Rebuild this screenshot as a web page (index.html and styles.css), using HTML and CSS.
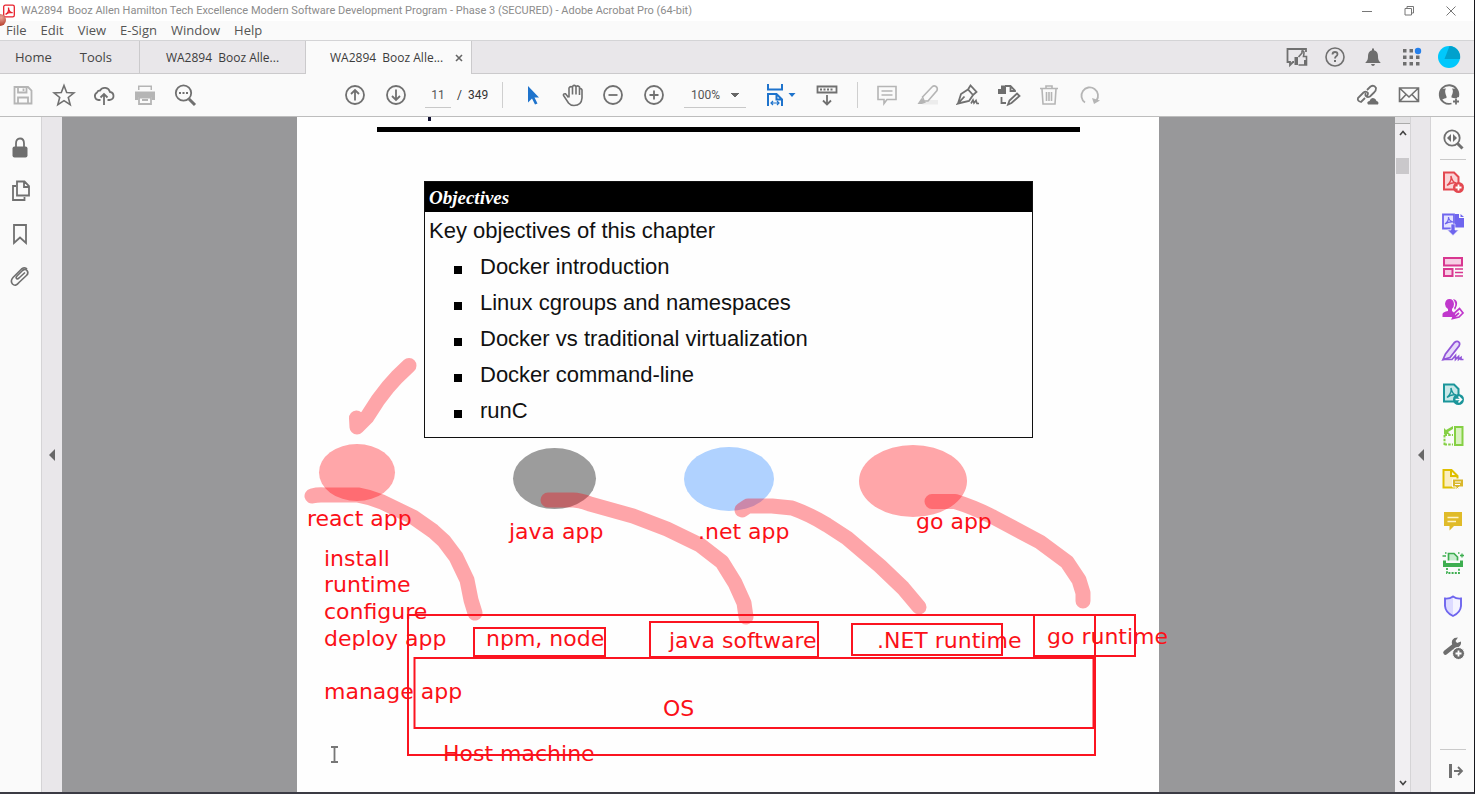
FILE: index.html
```html
<!DOCTYPE html>
<html lang="en">
<head>
<meta charset="utf-8">
<title>WA2894 - Adobe Acrobat Pro (64-bit)</title>
<link rel="stylesheet" href="styles.css">
</head>
<body>
<div class="app">
  <header class="titlebar">
    <svg class="app-logo" viewBox="0 0 14 14" aria-hidden="true"><rect x="1.7" y="1.2" width="10.6" height="11.6" rx="1.6" fill="#fff" stroke="#e8202c" stroke-width="1.3"/><path d="M3.6 10.4C6 9 7 6.500 6.500 3.600C6.500 7 8.500 9 10.600 8.600C8 8.200 5.500 8.800 3.600 10.400Z" fill="none" stroke="#e8202c" stroke-width="1.3"/></svg>
    <span class="title">WA2894&nbsp; Booz Allen Hamilton Tech Excellence Modern Software Development Program - Phase 3 (SECURED) - Adobe Acrobat Pro (64-bit)</span>
    <div class="window-controls">
      <button aria-label="Minimize"><svg viewBox="0 0 12 12"><path d="M1 6.500H11"/></svg></button>
      <button aria-label="Restore"><svg viewBox="0 0 12 12"><path d="M2 3.500h6.500v6.500H2ZM4 3.500V1.500h6.500V8H8.500"/></svg></button>
      <button aria-label="Close"><svg viewBox="0 0 12 12"><path d="M1.500 1.500L10.500 10.500M10.500 1.500L1.500 10.500"/></svg></button>
    </div>
  </header>

  <nav class="menubar" aria-label="Menu">
    <span class="record-dot"></span>
    <button>File</button><button>Edit</button><button>View</button><button>E-Sign</button><button>Window</button><button>Help</button>
  </nav>

  <div class="tabbar">
    <div class="fixed-tabs"><button>Home</button><button>Tools</button></div>
    <button class="tab">WA2894&nbsp; Booz Alle...</button>
    <div class="tab active"><button>WA2894&nbsp; Booz Alle...</button><button class="tab-close" aria-label="Close tab"><svg viewBox="0 0 8 8"><path d="M1 1L7 7M7 1L1 7"/></svg></button></div>
    <div class="icons account">
      <button aria-label="Feedback"><svg viewBox="0 0 24 24"><path d="M9 17H8L5 20V17H2.500V4H21V7" class="s"/><path d="M13.500 12L17 8V6q2-.5 2 2l-.5 3.500H21.500V20H13.500" class="s thin"/><path d="M9.500 12H13V20H9.500ZM19 15h3v5h-3Z" class="f"/></svg></button>
      <button aria-label="Help"><svg viewBox="0 0 24 24"><circle cx="12" cy="12" r="9" class="s thin"/><path d="M9.500 9.500Q9.500 7 12 7T14.500 9.300Q14.500 10.500 13 11.500Q12 12.300 12 13.500" class="s"/><rect x="11" y="15" width="2" height="2" class="f"/></svg></button>
      <button aria-label="Notifications"><svg viewBox="0 0 24 24"><path d="M11 3.500h2v1.700q4 1 4 5.800c0 4 1 5 2.500 6.500V18h-15v-.500C6 16 7 15 7 11q0-4.800 4-5.800ZM10 19h4q-.5 2-2 2t-2-2Z" class="f"/></svg></button>
      <button aria-label="Apps"><svg viewBox="0 0 24 24"><path d="M4 4h3.500v3.500H4ZM10.500 4h3.500v3.500h-3.500ZM4 10.500h3.500v3.500H4ZM10.500 10.500h3.500v3.500h-3.500ZM17 10.500h3.500v3.500H17ZM4 17h3.500v3.500H4ZM10.500 17h3.500v3.500h-3.500ZM17 17h3.500v3.500H17Z" class="f"/><circle cx="19" cy="6" r="3.200" fill="#2680eb"/></svg></button>
      <button aria-label="Account"><svg viewBox="0 0 24 24"><circle cx="12" cy="12" r="11" fill="#00c8fc"/><path d="M12.500 1A11 11 0 0 1 23 14H7.500Z" fill="#00a1cd"/></svg></button>
    </div>
  </div>

  <div class="toolbar">
    <div class="icons file-tools">
      <button aria-label="Save" class="off"><svg viewBox="0 0 24 24"><path d="M3.500 4H17l3.500 3.500V20.500H3.500ZM7 4.500V9.500H15.500V4.500M7 20V14.500H17V20M12.500 5.500V8" class="s"/></svg></button>
      <button aria-label="Star"><svg viewBox="0 0 24 24"><path d="M12 2.500L14.700 9.500L22 9.900L16.300 14.500L18.200 21.600L12 17.600L5.800 21.600L7.700 14.500L2 9.900L9.300 9.500Z" class="s thin"/></svg></button>
      <button aria-label="Upload"><svg viewBox="0 0 24 24"><path d="M8.500 17H6.500A4 4 0 0 1 5 9.500A3 3 0 0 1 8 7.500A5.500 5.500 0 0 1 18 9Q21.500 9.500 21.500 13T17.500 17H15.500" class="s"/><path d="M12 22V11M8.500 14.500L12 11L15.500 14.500" class="s"/></svg></button>
      <button aria-label="Print" class="off"><svg viewBox="0 0 24 24"><path d="M5 2.500H19V7H5ZM2 8.500H22V17H19V14H5V17H2Z" class="f"/><path d="M6.500 4H17.500V7H6.500Z" fill="#fafafa"/><path d="M6 14.500H18V21H6ZM9 17h6" class="s"/></svg></button>
      <button aria-label="Search"><svg viewBox="0 0 24 24"><circle cx="10.500" cy="10" r="7.700" class="s"/><path d="M16 16L22 22" class="s thick"/><path d="M6 9h2v2H6ZM9.500 9h2v2h-2ZM13 9h2v2h-2Z" class="f"/></svg></button>
    </div>
    <div class="icons page-arrows">
      <button aria-label="Previous page"><svg viewBox="0 0 24 24"><circle cx="12" cy="12" r="9" class="s"/><path d="M12 17.500V8M8 11L12 7L16 11" class="s"/></svg></button>
      <button aria-label="Next page"><svg viewBox="0 0 24 24"><circle cx="12" cy="12" r="9" class="s"/><path d="M12 6.500V16M8 13L12 17L16 13" class="s"/></svg></button>
    </div>
    <input class="page-number" aria-label="Page number" value="11">
    <span class="page-count">/&nbsp; 349</span>
    <span class="divider"></span>
    <div class="icons view-tools">
      <button aria-label="Select"><svg viewBox="0 0 24 24"><path d="M8 3L19 14.500H14.500L17.500 20.500L15 21.500L12 15.500L8 19.500Z" fill="#1e73cc"/></svg></button>
      <button aria-label="Hand"><svg viewBox="0 0 24 24"><path d="M7.500 14.500L4.500 10.800Q2 10.500 2.500 12.500L7.500 20Q9.500 22.500 13 22.500Q20.500 22.500 21 15V7Q20.500 5 18.500 6V12M18.500 7V4Q17 2 15 3.500V11.500M15 4Q13.500 1 11.500 3.500V11.500M11.500 4Q9 3 8 5V14.500" class="s thin"/></svg></button>
      <button aria-label="Zoom out"><svg viewBox="0 0 24 24"><circle cx="12" cy="12" r="9" class="s"/><path d="M7.500 12H16.500" class="s"/></svg></button>
      <button aria-label="Zoom in"><svg viewBox="0 0 24 24"><circle cx="12" cy="12" r="9" class="s"/><path d="M7.500 12H16.500M12 7.500V16.500" class="s"/></svg></button>
    </div>
    <select class="zoom-level" aria-label="Zoom level"><option>100%</option></select>
    <div class="icons fit-tools">
      <button aria-label="Fit width" class="wide"><svg viewBox="0 0 34 24"><path d="M5 1V6.500H19V1M5 23V11H13.500L19 16.500V23M13.500 11V16.500H19" fill="none" stroke="#1e73cc" stroke-width="2"/><path d="M8 20H16M10 18L8 20L10 22M14 18L16 20L14 22" fill="none" stroke="#1e73cc" stroke-width="1.200"/><path d="M25.500 10H32.500L29 14Z" fill="#1e73cc"/></svg></button>
      <button aria-label="Toolbar mode"><svg viewBox="0 0 24 24"><path d="M2.500 3.500H21.500V9.500H2.500Z" class="s"/><path d="M5 6.500H19" class="s" stroke-dasharray="2 1.500"/><path d="M12 12V21.500M8 17.500L12 21.500L16 17.500" class="s"/></svg></button>
    </div>
    <span class="divider"></span>
    <div class="icons mark-tools">
      <button aria-label="Comment" class="off"><svg viewBox="0 0 24 24"><path d="M3 3.500H21V16.500H12L9 20.500V16.500H3ZM6.500 8H17.500M6.500 12H17.500" class="s thin"/></svg></button>
      <button aria-label="Highlight" class="off"><svg viewBox="0 0 24 24"><path d="M10 17H22V21.500H6Z" fill="#ececec"/><path d="M6.500 14L16 4Q18 2 20 3.500T21 7.500L12 18H8Z" class="s thin"/><path d="M5.500 15L10 19.500L6 21H1.500Z" class="f"/></svg></button>
      <button aria-label="Sign"><svg viewBox="0 0 24 24"><path d="M2 20.500L5 11L12 6.500L17 12L13 18L2 20.500L8.500 13.500M12 6.500L14.500 2.500L20.500 9L17 12" class="s"/><path d="M15 20.500L17 17L18 20L20 17.500L21 20.500H23" class="s thin"/></svg></button>
      <button aria-label="Edit page"><svg viewBox="0 0 24 24"><path d="M1 6H9V11H1ZM4 2.500H9V6H4Z" class="f"/><path d="M8 3H13.500L18 7.500V9M13.500 3V8H18M4.500 14V20H9" class="s"/><path d="M11 21.500L12.500 17.500L20 10.500L22.500 13L14.500 20Z" class="s"/></svg></button>
      <button aria-label="Delete" class="off"><svg viewBox="0 0 24 24"><path d="M3 5.500H21M9 5V3H15V5M5 6L6 21H18L19 6M9.500 9V18M12 9V18M14.500 9V18" class="s thin"/></svg></button>
      <button aria-label="Redo" class="off"><svg viewBox="0 0 24 24"><path d="M7 19.500A8.300 8.300 0 1 1 18.500 17.500" class="s"/><path d="M14 15L22 17.500L16 21Z" class="f"/></svg></button>
    </div>
    <div class="icons share-tools">
      <button aria-label="Share link"><svg viewBox="0 0 24 24"><path d="M9 15L5 19Q1 18 2 15L7.500 9.500Q10 7.500 12 10Q12 12 11 13M11 7L14.500 3.500Q18 1.500 20 5Q20 8 18.500 9L14 13.500Q11 15 9.500 12.500Q9 11 10 10" class="s"/><path d="M12 21.500Q10 18.500 13.500 18Q15 14 18.500 15.500Q20 16 20.500 18Q23.500 19 22 21.500Z" class="f"/></svg></button>
      <button aria-label="Email"><svg viewBox="0 0 24 24"><path d="M2.500 5H21.500V18.500H2.500ZM3 5.500L12 14L21 5.500M3 18L9 11.500M21 18L15 11.500" class="s thin"/></svg></button>
      <button aria-label="Add person"><svg viewBox="0 0 24 24"><path d="M14.500 20.500A9.300 9.300 0 1 1 21 14" class="s"/><path d="M4 18Q5 16 9.500 15V13.500Q7 8 9 5.500L4 6L2.500 12ZM20 15Q17 15.500 14.500 14.500V13Q17 8 15 5.500L20 6L21.500 13Z" class="f"/><path d="M16 18.500H22M19 15.500V21.500" class="s"/></svg></button>
    </div>
  </div>

  <main class="workspace">
    <aside class="left-rail icons">
      <button aria-label="Security"><svg viewBox="0 0 24 24"><rect x="4.500" y="10.500" width="15" height="11" rx="2" class="f"/><path d="M8 11V7.500Q8 2.500 12 2.500T16 7.500V11" class="s"/></svg></button>
      <button aria-label="Pages"><svg viewBox="0 0 24 24"><path d="M9 2.500H16.500L21 7V16.500H9ZM16 3V8H21M8 7H5V21H16.500V18" class="s"/></svg></button>
      <button aria-label="Bookmarks"><svg viewBox="0 0 24 24"><path d="M6 3H18V21L12 15.500L6 21Z" class="s"/></svg></button>
      <button aria-label="Attachments"><svg viewBox="0 0 24 24"><path d="M17 7.500L11 13Q9 14.500 8.500 13.500Q7.500 12.500 9 11L14 6Q17 3 19 5.500Q21 8 18.500 10.500M20 9L11 17.500Q7.500 22 4.500 19Q2 16 5 12.500L13.500 4Q17 1.500 19 4" class="s thin"/></svg></button>
    </aside>
    <button class="gutter left" aria-label="Toggle navigation pane"><svg viewBox="0 0 6 12"><path d="M6 0V12L0 6Z"/></svg></button>

    <div class="document">
      <article class="page">
        <div class="heading-tail"></div>
        <hr class="rule">
        <section class="objectives">
          <h1>Objectives</h1>
          <p>Key objectives of this chapter</p>
          <ul>
            <li>Docker introduction</li>
            <li>Linux cgroups and namespaces</li>
            <li>Docker vs traditional virtualization</li>
            <li>Docker command-line</li>
            <li>runC</li>
          </ul>
        </section>
        <svg class="annotations" viewBox="297 117 862 675">
          <g>
            <ellipse cx="357" cy="472.500" rx="38" ry="28.500" class="pink"/>
            <ellipse cx="554.500" cy="478.500" rx="41.500" ry="30.500" fill="#9c9c9c"/>
            <ellipse cx="729" cy="479" rx="45" ry="32" fill="#b0d2ff"/>
            <ellipse cx="913" cy="481" rx="54" ry="36" class="pink"/>
          </g>
          <g class="marker">
            <path d="M409 365.500L397 377L388 387L378 400L367 417L357 427L356.500 418"/>
            <path d="M312 496Q318 494.500 324 495H358Q370 497 382 502L413 517L433 531L444 541L456 557L467 580L471 600L475 613"/>
            <path d="M548 500H573Q580 500 590 504L633 516L667 529L700 545L722 562L735 583L744 603L746 617"/>
            <path d="M742 510L748 506H772L792 508Q809 514 827 525L847 538L880 566L903 588L919 607"/>
            <path d="M932 501.500H955Q973 507 993 517L1040 542L1067 562L1079 580L1083 593V601"/>
          </g>
          <g class="boxes">
            <rect x="408" y="615" width="687" height="140"/>
            <rect x="414.500" y="658" width="679" height="70"/>
            <rect x="474" y="628" width="131" height="28"/>
            <rect x="650" y="622" width="168" height="35"/>
            <rect x="852" y="624" width="150" height="31"/>
            <rect x="1034" y="615" width="101" height="41"/>
          </g>
          <g class="labels">
            <text x="307" y="526">react app</text>
            <text x="509" y="539">java app</text>
            <text x="698" y="539">.net app</text>
            <text x="916" y="529">go app</text>
            <text x="324" y="566">install</text>
            <text x="324" y="592">runtime</text>
            <text x="324" y="619">configure</text>
            <text x="324" y="646">deploy app</text>
            <text x="324" y="699">manage app</text>
            <text x="486" y="646">npm, node</text>
            <text x="669" y="648">java software</text>
            <text x="877" y="648">.NET runtime</text>
            <text x="1047" y="644">go runtime</text>
            <text x="663" y="716">OS</text>
            <text x="443" y="761">Host machine</text>
          </g>
          <path d="M331 747H338M331 762H338M334.500 747V762" fill="none" stroke="#777" stroke-width="1.800"/>
        </svg>
      </article>
    </div>

    <div class="scrollbar">
      <span class="split"></span>
      <button aria-label="Scroll up"><svg viewBox="0 0 8 6"><path d="M1 5L4 1.500L7 5"/></svg></button>
      <div class="track"><div class="thumb"></div></div>
      <button aria-label="Scroll down"><svg viewBox="0 0 8 6"><path d="M1 1L4 4.500L7 1"/></svg></button>
    </div>
    <button class="gutter right" aria-label="Toggle tools pane"><svg viewBox="0 0 6 12"><path d="M6 0V12L0 6Z"/></svg></button>

    <aside class="right-rail icons">
      <button aria-label="Find tools"><svg viewBox="0 0 24 24"><circle cx="11" cy="11" r="7.700" class="s"/><path d="M16.500 16.500L21.500 21.500" class="s thick"/><path d="M10 7V15L6 11ZM12 7V15L16 11Z" class="f"/></svg></button>
      <span class="line"></span>
      <div class="tools">
        <button aria-label="Create PDF"><svg viewBox="0 0 24 24"><path d="M3 2.500H13L17.500 7V19.500H3Z" fill="#fbd5d8" stroke="#e34850" stroke-width="2"/><path d="M6 15.500Q11 11 10 6Q11 12 15 13Q10 12 6 15.500" fill="none" stroke="#e34850" stroke-width="1.500"/><circle cx="17.500" cy="17.500" r="5.500" fill="#e34850"/><path d="M14.500 17.500H20.500M17.500 14.500V20.500" stroke="#fff" stroke-width="1.800"/></svg></button>
        <button aria-label="Combine files"><svg viewBox="0 0 24 24"><path d="M2 2.500H13V16.500H2Z" fill="#e4e2ff" stroke="#6e65ee" stroke-width="1.800"/><path d="M14 2H18V6H23V15.500H14Z" fill="#6e65ee"/><path d="M19.500 2L23 5H19.500Z" fill="#6e65ee"/><path d="M4 12Q8 9 7.500 5Q8 9 12 10Q8 9.500 4 12" fill="none" stroke="#6e65ee" stroke-width="1.200"/><path d="M10 12h4v6h3.500L12 23.500L6.500 18H10Z" fill="#6e65ee" stroke="#fafafa" stroke-width=".6"/></svg></button>
        <button aria-label="Organize pages"><svg viewBox="0 0 24 24"><path d="M3 3H21V10.500H3ZM3 14H11.500V21H3Z" fill="#f7cfe5" stroke="#d83790" stroke-width="2"/><path d="M14 14H22M14 17.500H22M14 21H22" stroke="#d83790" stroke-width="1.300"/></svg></button>
        <button aria-label="Request signatures"><svg viewBox="0 0 24 24"><path d="M4 7Q4.500 2 8.500 2T13 7Q13 10 11 12V14L13.500 16V20H1.500V17Q2 15 7 14V12Q4 10 4 7ZM12 2Q17 3 16 8Q15 11 14 13L13 11Q16 7 12 2Z" fill="#c038cc"/><path d="M11.500 21.500L14 15.500L18.500 11.500L22 16L18 20ZM12 21L18 16" fill="#fafafa" stroke="#c038cc" stroke-width="1.700"/></svg></button>
        <button aria-label="Fill and sign"><svg viewBox="0 0 24 24"><path d="M2 20.500L4.500 15L13.500 3.500Q16.500 1 18.500 4Q19 5 18 7L9 18.500Z" fill="#e6dafa" stroke="#9256d9" stroke-width="1.800"/><path d="M2 20.500H11L14.500 16.500V20.500L17.500 17.500V20.500L20 18.500V20.500H22.500" fill="none" stroke="#9256d9" stroke-width="1.700"/></svg></button>
        <button aria-label="Export PDF"><svg viewBox="0 0 24 24"><path d="M3 2.500H13L17.500 7V19.500H3Z" fill="#c9e8e8" stroke="#1b959a" stroke-width="2"/><path d="M6 15.500Q11 11 10 6Q11 12 15 13Q10 12 6 15.500" fill="none" stroke="#1b959a" stroke-width="1.500"/><circle cx="17.500" cy="17.500" r="5.500" fill="#1b959a"/><path d="M14.500 17.500H20M17.500 14.500L20.500 17.500L17.500 20.500" fill="none" stroke="#fff" stroke-width="1.600"/></svg></button>
        <button aria-label="Compare"><svg viewBox="0 0 24 24"><path d="M14 3H21.500V21H14Z" fill="#d9f2c0" stroke="#85d044" stroke-width="2"/><path d="M3.500 11H12M3.500 20.500H12M3.500 11V21" fill="none" stroke="#85d044" stroke-width="2" stroke-dasharray="2.500 1.200"/><path d="M3 4V10H9L7 8L12 5V2L5 6Z" fill="#85d044"/></svg></button>
        <button aria-label="Review"><svg viewBox="0 0 24 24"><path d="M2.500 3H10.500L16.500 9V20.500H2.500ZM10 3V9H16" fill="#fbeec0" stroke="#dfbf00" stroke-width="2"/><path d="M11.500 12H22.500V20H18L15 23V20H11.500Z" fill="#d9b72c" stroke="#fafafa"/><path d="M14 15H20M14 17.500H19" stroke="#fff"/></svg></button>
        <button aria-label="Comment tool"><svg viewBox="0 0 24 24"><path d="M3 3H21V17H13L8.500 21.500V17H3Z" fill="#e0bb29"/><path d="M6.500 8.500H17.500M6.500 12.500H15" stroke="#fff4c8" stroke-width="1.700"/></svg></button>
        <button aria-label="Scan and OCR"><svg viewBox="0 0 24 24"><path d="M7.500 9.500V2.500H13L16.500 6V9.500" fill="#c9edd0" stroke="#3eae50" stroke-width="1.700"/><path d="M2 9.500H5V12H19V9.500H22V16H2Z" fill="#3eae50"/><path d="M6 17V22H18V17" fill="none" stroke="#3eae50" stroke-width="1.800" stroke-dasharray="2 1.200"/><path d="M1.500 5H5M19 4.500H23M21 2.500V6.500M4 2H5.500M17 2H18.500" stroke="#3eae50" stroke-width="1.300"/></svg></button>
        <button aria-label="Protect"><svg viewBox="0 0 24 24"><path d="M12 2.500Q15.500 5 20 4.500V12Q19.500 18.500 12 22Q4.500 18.500 4 12V4.500Q8.500 5 12 2.500Z" fill="#f4f3ff"/><path d="M12 2.500Q8.500 5 4 4.500V12Q4.500 18.500 12 22Z" fill="#dcdaff"/><path d="M12 2.500Q15.500 5 20 4.500V12Q19.500 18.500 12 22Q4.500 18.500 4 12V4.500Q8.500 5 12 2.500Z" fill="none" stroke="#6e65ee" stroke-width="1.900"/></svg></button>
        <button aria-label="More tools"><svg viewBox="0 0 24 24"><path d="M4.500 16.500L14 9" stroke="#6e6e6e" stroke-width="4.500" stroke-linecap="round"/><path d="M11 8Q10 4 13.500 2L17 1.500L14.500 5L16 7L20 5.500Q20.500 9 17.500 11Q13 12.500 11 8Z" class="f"/><circle cx="17.500" cy="17.500" r="6" fill="#6e6e6e" stroke="#fafafa"/><path d="M14.500 17.500H20.500M17.500 14.500V20.500" stroke="#fff" stroke-width="1.800"/></svg></button>
      </div>
      <div class="rail-foot">
        <span class="line"></span>
        <button aria-label="Collapse pane"><svg viewBox="0 0 24 24"><path d="M9.500 5V19" class="s thick"/><path d="M13 12H20M17 8L21 12L17 16" class="s"/></svg></button>
      </div>
    </aside>
  </main>
</div>
</body>
</html>
```
FILE: styles.css
```css
* { box-sizing: border-box; }

body {
  margin: 0;
  color: #454545;
  font: 13px "Open Sans", "Noto Sans", sans-serif;
}

button {
  margin: 0;
  padding: 0;
  border: 0;
  background: none;
  color: inherit;
  font: inherit;
  white-space: nowrap;
}

svg { display: block; }

.app {
  display: flex;
  flex-direction: column;
  height: 100vh;
  min-height: 600px;
  border-right: 1px solid #17171c;
  border-bottom: 2px solid #3b3b44;
  background: #fafafa;
}

/* Title bar and menu */
.titlebar {
  display: flex;
  flex: none;
  align-items: center;
  height: 21px;
  padding-left: 2px;
  background: #fff;
}

.app-logo { width: 14px; height: 14px; }

.title {
  margin-left: 5px;
  color: #8c8c8c;
  font: 11px Roboto, "Open Sans", sans-serif;
  white-space: nowrap;
}

.window-controls {
  display: flex;
  gap: 30px;
  margin-left: auto;
  padding-right: 17px;
}

.window-controls svg {
  width: 12px;
  height: 12px;
  fill: none;
  stroke: #777;
  stroke-width: 1;
}

.menubar {
  position: relative;
  display: flex;
  flex: none;
  gap: 14px;
  height: 20px;
  padding-left: 6px;
  border-bottom: 1px solid #d4d4d6;
  color: #555;
  line-height: 19px;
}

.record-dot {
  position: absolute;
  top: -7px;
  left: -6px;
  width: 12px;
  height: 12px;
  border-radius: 50%;
  background: radial-gradient(circle at 60% 30%, #e9a79c, #b8422f 70%);
}

/* Tabs */
.tabbar {
  display: flex;
  flex: none;
  height: 33px;
  border-bottom: 1px solid #cbcacc;
  background: #e9e7ea;
}

.fixed-tabs {
  display: flex;
  gap: 28px;
  width: 139px;
  padding-left: 15px;
}

.tab {
  width: 166px;
  border-left: 1px solid #cbcacc;
  color: #3c3c3c;
  font-size: 12px;
}

.tab.active {
  display: flex;
  align-items: center;
  gap: 12px;
  width: 167px;
  height: 33px;
  padding-left: 24px;
  border-right: 1px solid #cbcacc;
  background: #fafafa;
}

.tab-close svg {
  width: 8px;
  height: 8px;
  stroke: #666;
  stroke-width: 1.6;
}

/* Icon buttons */
.icons {
  display: flex;
  align-items: center;
  justify-content: space-between;
}

.icons svg { width: 24px; height: 24px; }
.icons .wide svg { width: 34px; }
.s { fill: none; stroke: #707070; stroke-width: 1.8; }
.thin { stroke-width: 1.6; }
.thick { stroke-width: 3; }
.f { fill: #6e6e6e; }
.off .s { stroke: #b5b5b5; }
.off .f { fill: #b5b5b5; }

.account {
  width: 176px;
  margin-left: auto;
  margin-right: 13px;
}

/* Toolbar */
.toolbar {
  display: flex;
  flex: none;
  align-items: center;
  height: 43px;
  padding: 0 13px 0 11px;
  border-bottom: 1px solid #bdbdbd;
  color: #333;
  font-size: 12px;
}

.file-tools { width: 186px; }
.page-arrows { width: 65px; margin-left: 146px; }

.page-number,
.zoom-level {
  height: 26px;
  border: 0;
  border-bottom: 1px solid #c8c8c8;
  border-radius: 0;
  background: none;
  color: #555;
  font: 12px Roboto, sans-serif;
}

.page-number {
  width: 26px;
  margin-left: 17px;
  padding: 0;
  text-align: center;
}

.page-count {
  width: 45px;
  margin-left: 6px;
  font: 12px Roboto, sans-serif;
  white-space: nowrap;
}

.divider { width: 1px; height: 26px; background: #cfcfcf; }
.view-tools { width: 146px; margin-left: 17px; }

.zoom-level {
  appearance: none;
  width: 62px;
  margin-left: 18px;
  padding: 0 0 0 7px;
  background: linear-gradient(to bottom right, #666 50%, transparent 51%) 51px 11px / 4px 4px no-repeat,
    linear-gradient(to bottom left, #666 50%, transparent 51%) 47px 11px / 4px 4px no-repeat;
}

.fit-tools { width: 76px; margin-left: 17px; }
.fit-tools + .divider { margin-left: 18px; }
.mark-tools { width: 227px; margin-left: 17px; }
.share-tools { width: 105px; margin-left: auto; }

/* Workspace */
.workspace {
  display: flex;
  flex: 1;
  min-height: 0;
}

.left-rail {
  flex-direction: column;
  justify-content: flex-start;
  gap: 19px;
  width: 41px;
  padding: 19px 1px 0 0;
}

.gutter {
  display: grid;
  place-items: center;
  width: 21px;
  border-left: 1px solid #d5d4d6;
  background: #e9e7ea;
}

.gutter svg { width: 6px; height: 12px; fill: #686868; }
.gutter.right { border-right: 1px solid #d5d4d6; }

.document {
  display: flex;
  flex: 1;
  justify-content: center;
  min-width: 0;
  padding-right: 1px;
  overflow: hidden;
  background: #98989a;
}

.page {
  position: relative;
  flex: none;
  width: 862px;
  background: #fefefe;
  color: #111;
}

.heading-tail {
  width: 3px;
  height: 4px;
  margin-left: 131px;
  background: #101030;
}

.rule {
  height: 5px;
  margin: 6px 79px 0 80px;
  border: 0;
  background: #000;
}

.objectives {
  margin: 49px 126px 0 127px;
  padding-bottom: 8px;
  border: 1px solid #111;
  font: 22px "Liberation Sans", Arial, sans-serif;
}

.objectives h1 {
  margin: 0;
  padding: 2px 0 0 4px;
  background: #000;
  color: #fff;
  font: italic bold 19px/28px "Liberation Serif", "Times New Roman", serif;
}

.objectives p {
  margin: 0;
  padding: 1px 0 0 4px;
  line-height: 36px;
}

.objectives ul { margin: 0; padding: 0; list-style: none; }

.objectives li {
  display: flex;
  align-items: center;
  gap: 18px;
  padding-left: 29px;
  line-height: 36px;
}

.objectives li::before {
  width: 8px;
  height: 8px;
  margin-top: 6px;
  background: #000;
  content: "";
}

/* Ink and shapes drawn over the page */
.annotations {
  position: absolute;
  top: 0;
  left: 0;
  width: 862px;
  height: 675px;
  overflow: visible;
}

.pink { fill: #ffa6a9; }

.marker path {
  fill: none;
  stroke: #ff000c;
  stroke-linecap: round;
  stroke-linejoin: round;
  stroke-opacity: .35;
  stroke-width: 15;
}

.boxes rect { fill: none; stroke: #fb1420; stroke-width: 2; }
.labels text { fill: #fb1018; font: 22px "DejaVu Sans", Verdana, sans-serif; }

/* Scroll bar */
.scrollbar {
  display: flex;
  flex-direction: column;
  width: 15px;
  background: #f1eff2;
}

.scrollbar button {
  display: grid;
  place-items: center;
  height: 18px;
}

.scrollbar svg {
  width: 8px;
  height: 6px;
  fill: none;
  stroke: #444;
  stroke-width: 1.6;
}

.split { height: 7px; border-bottom: 1px solid #aaa; background: #e2e1e3; }
.track { flex: 1; padding-top: 16px; }
.thumb { height: 16px; margin: 0 1px; background: #cac8cb; }

/* Right rail */
.right-rail {
  flex-direction: column;
  justify-content: flex-start;
  width: 43px;
  padding-top: 10px;
}

.line { width: 26px; height: 1px; background: #cacaca; }
.right-rail > .line { margin: 8px 0 10px; }

.tools {
  display: flex;
  flex-direction: column;
  justify-content: space-between;
  height: 490px;
}

.rail-foot {
  display: flex;
  flex-direction: column;
  align-items: center;
  gap: 9px;
  margin-top: auto;
  padding-bottom: 9px;
}
```
